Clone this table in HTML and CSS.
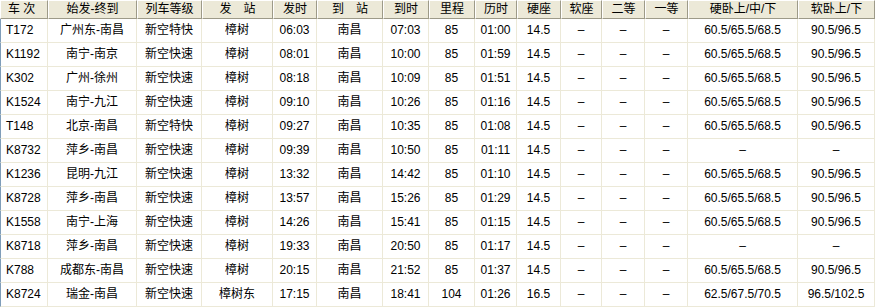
FILE: index.html
```html
<!DOCTYPE html>
<html lang="zh-CN">
<head>
<meta charset="utf-8">
<title>列车时刻表</title>
<link rel="stylesheet" href="styles.css">
</head>
<body>
<table class="grid">
  <colgroup>
    <col class="c48"><col class="c89"><col class="c65"><col class="c71"><col class="c44">
    <col class="c66"><col class="c46"><col class="c46"><col class="c42"><col class="c44">
    <col class="c41"><col class="c43"><col class="c43"><col class="c110"><col class="c77">
  </colgroup>
  <thead>
    <tr>
      <th class="first">车 次</th><th>始发-终到</th><th>列车等级</th><th>发　站</th><th>发时</th>
      <th>到　站</th><th>到时</th><th>里程</th><th>历时</th><th>硬座</th>
      <th>软座</th><th>二等</th><th>一等</th><th>硬卧上/中/下</th><th>软卧上/下</th>
    </tr>
  </thead>
  <tbody>
    <tr><td class="first">T172</td><td>广州东-南昌</td><td>新空特快</td><td>樟树</td><td>06:03</td><td>南昌</td><td>07:03</td><td>85</td><td>01:00</td><td>14.5</td><td>–</td><td>–</td><td>–</td><td>60.5/65.5/68.5</td><td>90.5/96.5</td></tr>
    <tr><td class="first">K1192</td><td>南宁-南京</td><td>新空快速</td><td>樟树</td><td>08:01</td><td>南昌</td><td>10:00</td><td>85</td><td>01:59</td><td>14.5</td><td>–</td><td>–</td><td>–</td><td>60.5/65.5/68.5</td><td>90.5/96.5</td></tr>
    <tr><td class="first">K302</td><td>广州-徐州</td><td>新空快速</td><td>樟树</td><td>08:18</td><td>南昌</td><td>10:09</td><td>85</td><td>01:51</td><td>14.5</td><td>–</td><td>–</td><td>–</td><td>60.5/65.5/68.5</td><td>90.5/96.5</td></tr>
    <tr><td class="first">K1524</td><td>南宁-九江</td><td>新空快速</td><td>樟树</td><td>09:10</td><td>南昌</td><td>10:26</td><td>85</td><td>01:16</td><td>14.5</td><td>–</td><td>–</td><td>–</td><td>60.5/65.5/68.5</td><td>90.5/96.5</td></tr>
    <tr><td class="first">T148</td><td>北京-南昌</td><td>新空特快</td><td>樟树</td><td>09:27</td><td>南昌</td><td>10:35</td><td>85</td><td>01:08</td><td>14.5</td><td>–</td><td>–</td><td>–</td><td>60.5/65.5/68.5</td><td>90.5/96.5</td></tr>
    <tr><td class="first">K8732</td><td>萍乡-南昌</td><td>新空快速</td><td>樟树</td><td>09:39</td><td>南昌</td><td>10:50</td><td>85</td><td>01:11</td><td>14.5</td><td>–</td><td>–</td><td>–</td><td>–</td><td>–</td></tr>
    <tr><td class="first">K1236</td><td>昆明-九江</td><td>新空快速</td><td>樟树</td><td>13:32</td><td>南昌</td><td>14:42</td><td>85</td><td>01:10</td><td>14.5</td><td>–</td><td>–</td><td>–</td><td>60.5/65.5/68.5</td><td>90.5/96.5</td></tr>
    <tr><td class="first">K8728</td><td>萍乡-南昌</td><td>新空快速</td><td>樟树</td><td>13:57</td><td>南昌</td><td>15:26</td><td>85</td><td>01:29</td><td>14.5</td><td>–</td><td>–</td><td>–</td><td>60.5/65.5/68.5</td><td>90.5/96.5</td></tr>
    <tr><td class="first">K1558</td><td>南宁-上海</td><td>新空快速</td><td>樟树</td><td>14:26</td><td>南昌</td><td>15:41</td><td>85</td><td>01:15</td><td>14.5</td><td>–</td><td>–</td><td>–</td><td>60.5/65.5/68.5</td><td>90.5/96.5</td></tr>
    <tr><td class="first">K8718</td><td>萍乡-南昌</td><td>新空快速</td><td>樟树</td><td>19:33</td><td>南昌</td><td>20:50</td><td>85</td><td>01:17</td><td>14.5</td><td>–</td><td>–</td><td>–</td><td>–</td><td>–</td></tr>
    <tr><td class="first">K788</td><td>成都东-南昌</td><td>新空快速</td><td>樟树</td><td>20:15</td><td>南昌</td><td>21:52</td><td>85</td><td>01:37</td><td>14.5</td><td>–</td><td>–</td><td>–</td><td>60.5/65.5/68.5</td><td>90.5/96.5</td></tr>
    <tr><td class="first">K8724</td><td>瑞金-南昌</td><td>新空快速</td><td>樟树东</td><td>17:15</td><td>南昌</td><td>18:41</td><td>104</td><td>01:26</td><td>16.5</td><td>–</td><td>–</td><td>–</td><td>62.5/67.5/70.5</td><td>96.5/102.5</td></tr>
  </tbody>
</table>
</body>
</html>
```

FILE: styles.css
```css
html, body {
  margin: 0;
  padding: 0;
  background: #ffffff;
}

.grid {
  width: 875px;
  table-layout: fixed;
  border-collapse: separate;
  border-spacing: 0;
  font-family: "Liberation Sans", "Noto Sans CJK SC", sans-serif;
  font-size: 12px;
  color: #000000;
}

.c48 { width: 48px; }
.c89 { width: 89px; }
.c65 { width: 65px; }
.c71 { width: 71px; }
.c44 { width: 44px; }
.c66 { width: 66px; }
.c46 { width: 46px; }
.c42 { width: 42px; }
.c41 { width: 41px; }
.c43 { width: 43px; }
.c110 { width: 110px; }
.c77 { width: 77px; }

.grid th {
  height: 17px;
  padding: 0;
  font-weight: normal;
  text-align: center;
  white-space: pre;
  overflow: hidden;
  background: #ece9d8;
  border-top: 1px solid #ffffff;
  border-left: 1px solid #ffffff;
  border-right: 1px solid #9d9a88;
  border-bottom: 1px solid #9d9a88;
  line-height: 17px;
}

.grid th.first {
  text-align: left;
  padding-left: 7px;
}

.grid td {
  height: 23px;
  padding: 0;
  text-align: center;
  white-space: nowrap;
  overflow: hidden;
  border-right: 1px solid #ece9d8;
  border-bottom: 1px solid #ece9d8;
  line-height: 23px;
}

.grid td.first {
  text-align: left;
  padding-left: 5px;
  border-left: 1px solid #7f9db9;
}
```
